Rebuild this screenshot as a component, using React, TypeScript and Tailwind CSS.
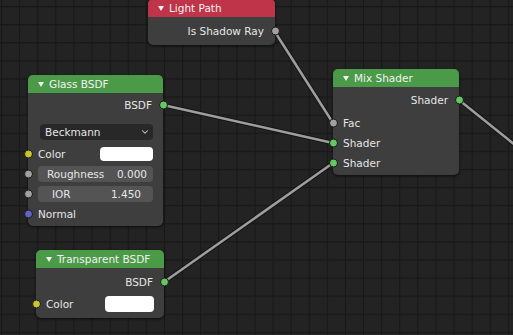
import { ChevronDown } from "lucide-react";
import type { ReactNode } from "react";

function Socket({ color, side }: { color: string; side: "l" | "r" }) {
  return (
    <span
      className={`absolute top-1/2 -translate-y-1/2 w-[9px] h-[9px] rounded-full border border-[#1a1a1a] ${color} ${
        side === "l" ? "-left-[4.5px]" : "-right-[4.5px]"
      }`}
    />
  );
}

function Tri() {
  return (
    <svg width="6" height="5" viewBox="0 0 6 5" className="shrink-0">
      <path d="M0 0 H6 L3 5 Z" fill="#f0f0f0" />
    </svg>
  );
}

function Node({
  className,
  title,
  header,
  children,
}: {
  className: string;
  title: string;
  header: string;
  children: ReactNode;
}) {
  return (
    <div
      className={`absolute rounded-[5px] bg-[#3e3e3e] shadow-[0_1px_3px_rgba(0,0,0,0.7)] ${className}`}
    >
      <div
        className={`h-[18px] rounded-t-[5px] flex items-center pl-[10px] gap-[5px] text-[#f2f2f2] ${header}`}
      >
        <Tri />
        <span>{title}</span>
      </div>
      {children}
    </div>
  );
}

function OutRow({ label, color }: { label: string; color: string }) {
  return (
    <div className="relative h-[20px] flex items-center justify-end pr-[11px]">
      <span>{label}</span>
      <Socket color={color} side="r" />
    </div>
  );
}

function InRow({
  label,
  color,
  children,
}: {
  label: string;
  color: string;
  children?: ReactNode;
}) {
  return (
    <div className="relative h-[20px] flex items-center justify-between pl-[10px] pr-[10px]">
      <span>{label}</span>
      {children}
      <Socket color={color} side="l" />
    </div>
  );
}

const GREEN = "bg-[#63c763]";
const GRAY = "bg-[#a1a1a1]";
const YELLOW = "bg-[#c7c729]";
const PURPLE = "bg-[#6363c7]";

export default function App() {
  const links: [number, number, number, number][] = [
    [275, 32, 333, 123],
    [163, 105, 333, 143],
    [164, 282, 333, 163],
    [459, 100, 520, 149],
  ];
  return (
    <div className="relative w-[513px] h-[335px] overflow-hidden bg-[#232323] font-['DejaVu_Sans',sans-serif] text-[10.5px] leading-none text-[#e6e6e6]">
      <svg className="absolute inset-0" width="513" height="335">
        <defs>
          <pattern
            id="grid"
            patternUnits="userSpaceOnUse"
            x="1"
            y="6"
            width="18.1"
            height="18.1"
          >
            <path d="M0.5 0 V18.1 M0 0.5 H18.1" stroke="#181818" strokeWidth="1.2" fill="none" />
          </pattern>
        </defs>
        <rect width="513" height="335" fill="url(#grid)" />
        {links.map(([x1, y1, x2, y2], i) => (
          <g key={i}>
            <line x1={x1} y1={y1} x2={x2} y2={y2} stroke="#151515" strokeWidth="4.5" strokeLinecap="round" />
            <line x1={x1} y1={y1} x2={x2} y2={y2} stroke="#9e9e9e" strokeWidth="2.5" strokeLinecap="round" />
          </g>
        ))}
      </svg>

      <Node className="left-[148px] -top-[1px] w-[127px] pb-[4px]" title="Light Path" header="bg-[#bf3448] pt-[1px]">
        <div className="pt-[4px]">
          <OutRow label="Is Shadow Ray" color={GRAY} />
        </div>
      </Node>

      <Node className="left-[28px] top-[75px] w-[135px] pb-[2px]" title="Glass BSDF" header="bg-[#4b9a48]">
        <div className="pt-[2px]">
          <OutRow label="BSDF" color={GREEN} />
        </div>
        <div className="mt-[9px] mb-[4px] ml-[12px] mr-[10px] h-[16px] rounded-[4px] bg-[#282828] flex items-center justify-between pl-[5px] pr-[3px]">
          <span>Beckmann</span>
          <ChevronDown size={10} strokeWidth={2.5} color="#d0d0d0" />
        </div>
        <InRow label="Color" color={YELLOW}>
          <span className="w-[53px] h-[14px] rounded-[4px] bg-white" />
        </InRow>
        <div className="relative h-[20px] flex items-center px-[10px]">
          <div className="w-full h-[16px] rounded-[4px] bg-[#545454] flex items-center justify-between pl-[9px] pr-[6px]">
            <span>Roughness</span>
            <span>0.000</span>
          </div>
          <Socket color={GRAY} side="l" />
        </div>
        <div className="relative h-[20px] flex items-center px-[10px]">
          <div className="w-full h-[16px] rounded-[4px] bg-[#545454] flex items-center justify-between pl-[14px] pr-[12px]">
            <span>IOR</span>
            <span>1.450</span>
          </div>
          <Socket color={GRAY} side="l" />
        </div>
        <InRow label="Normal" color={PURPLE} />
      </Node>

      <Node className="left-[333px] top-[69px] w-[126px] pb-[2px]" title="Mix Shader" header="bg-[#4b9a48]">
        <div className="pt-[3px] pb-[3px]">
          <OutRow label="Shader" color={GREEN} />
        </div>
        <InRow label="Fac" color={GRAY} />
        <InRow label="Shader" color={GREEN} />
        <InRow label="Shader" color={GREEN} />
      </Node>

      <Node className="left-[36px] top-[250px] w-[128px] pb-[4px]" title="Transparent BSDF" header="bg-[#4b9a48]">
        <div className="pt-[4px] pb-[2px]">
          <OutRow label="BSDF" color={GREEN} />
        </div>
        <InRow label="Color" color={YELLOW}>
          <span className="w-[49px] h-[16px] rounded-[4px] bg-white" />
        </InRow>
      </Node>
    </div>
  );
}
